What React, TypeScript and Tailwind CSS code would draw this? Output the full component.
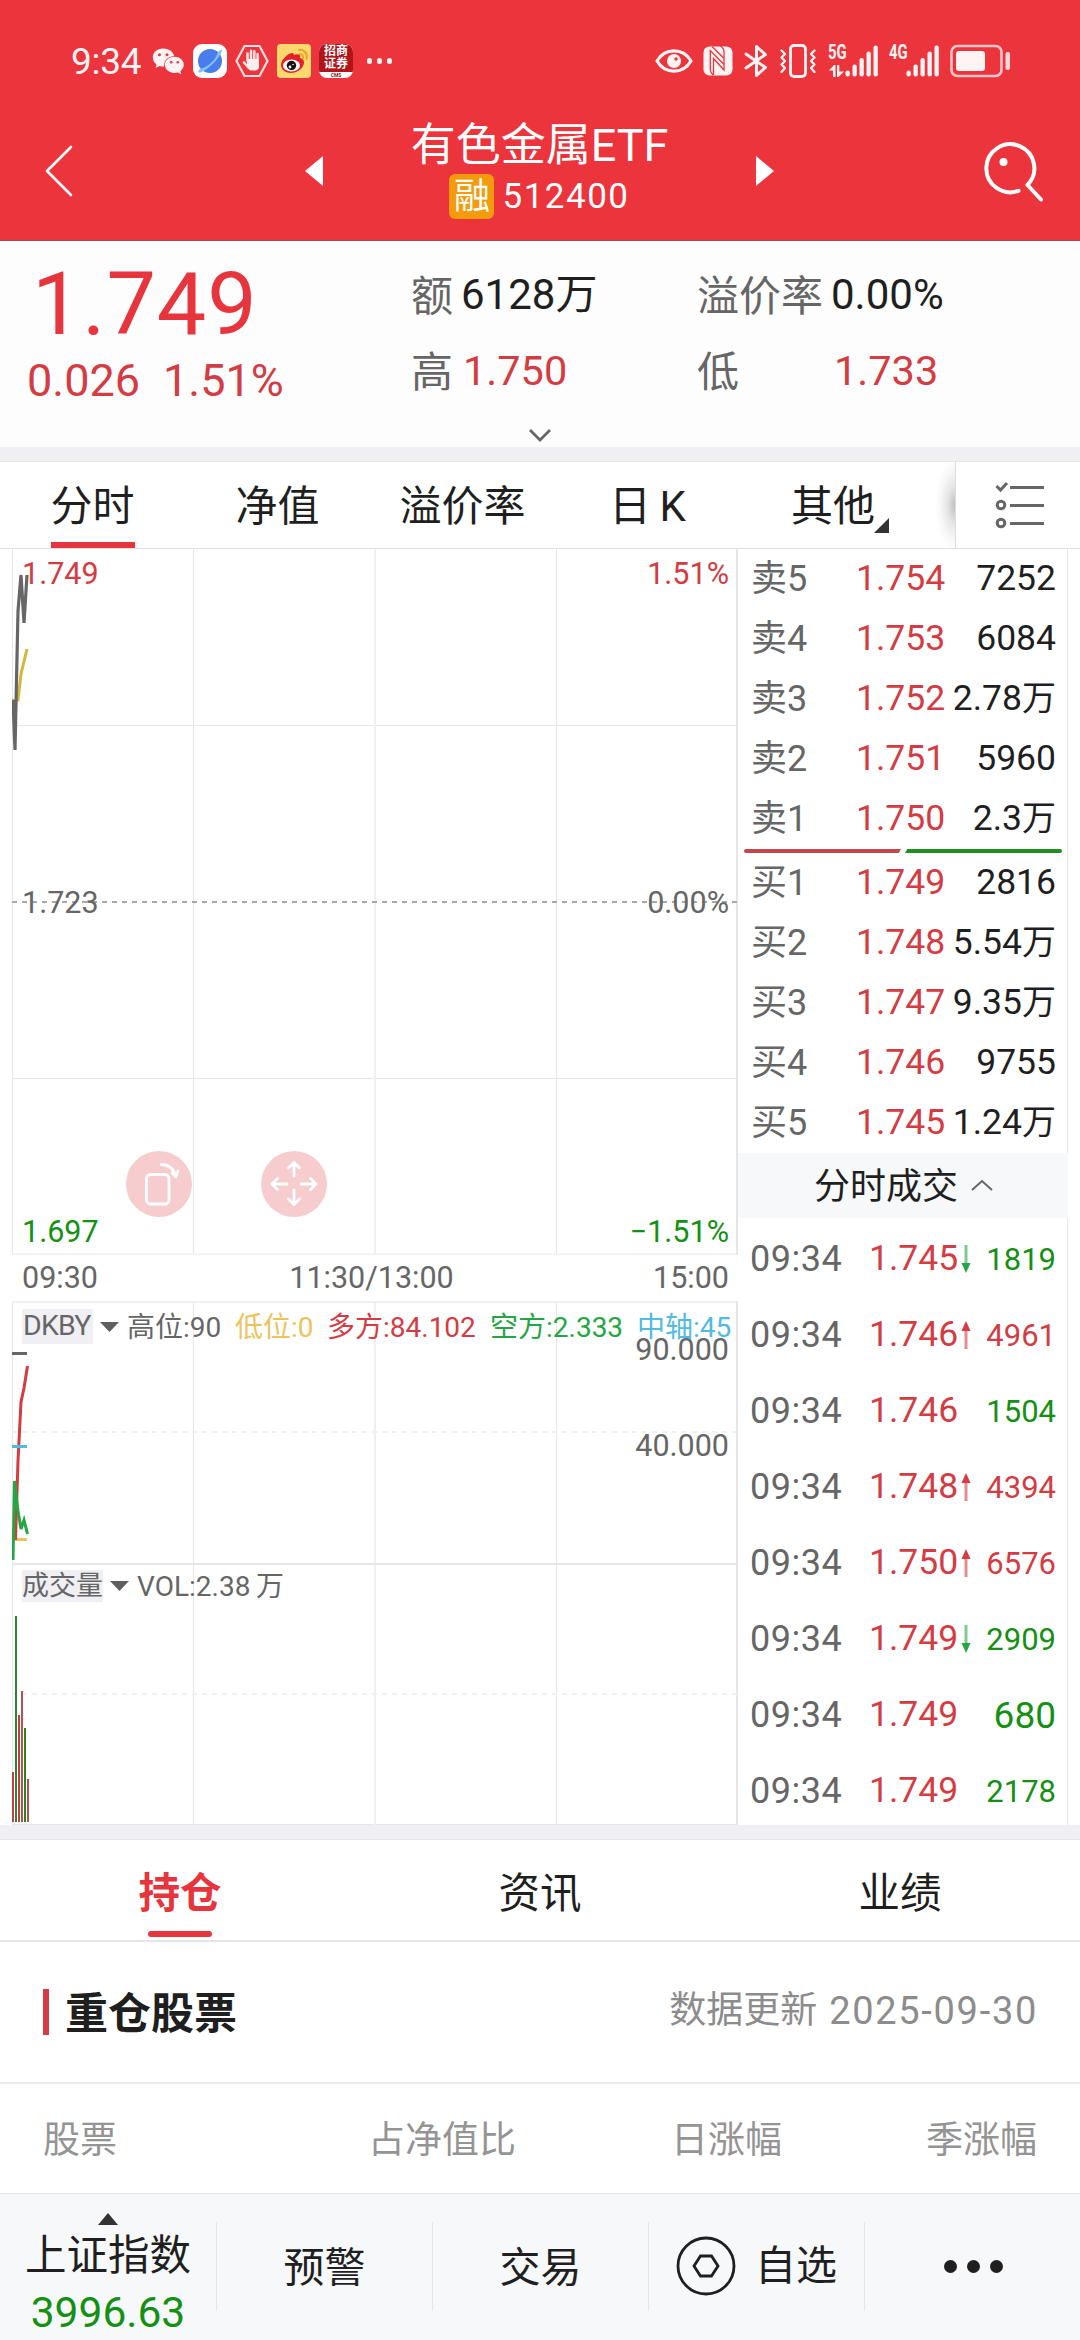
import React from "react";

type Tone = "red" | "green" | "none";

const sells = [
  ["卖5", "1.754", "7252"],
  ["卖4", "1.753", "6084"],
  ["卖3", "1.752", "2.78万"],
  ["卖2", "1.751", "5960"],
  ["卖1", "1.750", "2.3万"],
];
const buys = [
  ["买1", "1.749", "2816"],
  ["买2", "1.748", "5.54万"],
  ["买3", "1.747", "9.35万"],
  ["买4", "1.746", "9755"],
  ["买5", "1.745", "1.24万"],
];
const trades: { price: string; vol: string; arrow: Tone; tone: Tone }[] = [
  { price: "1.745", vol: "1819", arrow: "green", tone: "green" },
  { price: "1.746", vol: "4961", arrow: "red", tone: "red" },
  { price: "1.746", vol: "1504", arrow: "none", tone: "green" },
  { price: "1.748", vol: "4394", arrow: "red", tone: "red" },
  { price: "1.750", vol: "6576", arrow: "red", tone: "red" },
  { price: "1.749", vol: "2909", arrow: "green", tone: "green" },
  { price: "1.749", vol: "680", arrow: "none", tone: "green" },
  { price: "1.749", vol: "2178", arrow: "none", tone: "green" },
];

function StatusBar() {
  return (
    <div className="flex h-[122px] items-center pl-[71px] pr-[69px] text-[#fff3f3]">
      <span className="w-[81px] text-[37px] leading-none tracking-[-0.3px]">9:34</span>
      <svg width="34" height="34" viewBox="0 0 34 34" className="mr-[7px]">
        <path d="M11 4.500C5 4.500.8 8.500.8 13.600c0 3 1.500 5.300 3.700 6.900L3.600 24l4-2c1.500.5 3 .7 4.600.6-.8-6 4-10.500 10-10.300C21.300 7.500 16.800 4.500 11 4.500z" fill="#fff3f3" />
        <path d="M31.800 20.800c0-4.500-4.300-8-9.400-8-5.300 0-9.500 3.500-9.500 8s4.200 8.100 9.500 8.100c1.200 0 2.300-.2 3.400-.5l3.500 1.900-.9-3.100c2.100-1.600 3.400-3.700 3.400-6.400z" fill="#fff3f3" />
        <g fill="#eb343c"><circle cx="7.500" cy="10.800" r="1.500" /><circle cx="15" cy="10.800" r="1.500" /><circle cx="19.200" cy="18.300" r="1.300" /><circle cx="25.800" cy="18.300" r="1.300" /></g>
      </svg>
      <svg width="34" height="34" viewBox="0 0 34 34" className="mr-[8px]">
        <rect width="34" height="34" rx="9" fill="#fff" />
        <circle cx="17" cy="17" r="12" fill="#4a7cec" />
        <path d="M24.500 8.500C28 5 30 5 28.500 8 26 14.500 15 26 8 28.300c-4 1.200-3-1.300-.5-3.800C13 24.500 24 15 24.500 8.500z" fill="#7cc4fb" />
      </svg>
      <svg width="34" height="34" viewBox="0 0 34 34" className="mr-[8px]" fill="none" stroke="#ffdede" strokeLinecap="round">
        <path d="M9.500 2h15L32.500 17l-8 15h-15L1.500 17z" strokeWidth="2.200" strokeLinejoin="round" />
        <path d="M12.500 17V9.500M16 16V6.800M19.300 16V7.300M22.600 17v-7M9 18.500l4 4.500" strokeWidth="2.600" />
        <path d="M12 15h12v8c0 2-2 3.500-4 3.500h-4c-2 0-4-3-4-5z" fill="#ffeeee" stroke="none" />
      </svg>
      <svg width="34" height="34" viewBox="0 0 34 34" className="mr-[8px]">
        <rect width="34" height="34" rx="4" fill="#fbd96d" />
        <path d="M12 10c3-2 5-1 5 1 5-2 7 0 6 3 4 1 5 4 3 8-2 4-7 7-12 7S4 26 4 21s5-9 8-11z" fill="#e4202c" />
        <ellipse cx="14.500" cy="21.500" rx="8.500" ry="6" fill="#fff" />
        <circle cx="14.500" cy="21.500" r="4.700" fill="#111" /><circle cx="13" cy="23" r="1.400" fill="#fff" /><circle cx="16" cy="20.500" r=".8" fill="#fff" />
        <path d="M22 6c5-1 9 4 7.500 9M22.500 10c3 0 4 2 3.500 4.500" fill="none" stroke="#eba527" strokeWidth="2" strokeLinecap="round" />
      </svg>
      <div className="flex h-[34px] w-[34px] flex-col items-center overflow-hidden rounded-[8px] bg-white">
        <div className="flex h-[28px] w-full flex-col items-center justify-center bg-[#b01519] text-[12px] leading-[13px] font-bold text-white">
          <span>招商</span>
          <span>证券</span>
        </div>
        <span className="text-[5px] leading-[6px] font-bold text-[#8c1a1a]">CMS</span>
      </div>
      <div className="ml-[14px] flex gap-[5px]">
        <i className="h-[6px] w-[5px] rounded-full bg-[#fff3f3]" />
        <i className="h-[6px] w-[5px] rounded-full bg-[#fff3f3]" />
        <i className="h-[6px] w-[5px] rounded-full bg-[#fff3f3]" />
      </div>

      <div className="ml-auto flex items-center">
        <svg width="38" height="34" viewBox="0 0 38 34" className="mr-[10px]">
          <path d="M2 17C10 3.500 28 3.500 36 17 28 30.500 10 30.500 2 17z" fill="none" stroke="#fff3f3" strokeWidth="3.200" strokeLinejoin="round" />
          <circle cx="19" cy="17" r="7" fill="#fff3f3" /><circle cx="21" cy="15" r="1.700" fill="#eb343c" />
        </svg>
        <svg width="30" height="34" viewBox="0 0 30 34" className="mr-[11px]">
          <rect x=".5" y="2.500" width="29" height="29" rx="6" fill="#fff3f3" />
          <path d="M10.500 31V14.500L21 26V8c0-2.500-1-4.500-3.500-6M9 2.500L20.500 14M10.500 31C8 29.500 7.300 27.500 7.300 25V6.500L20.500 20" fill="none" stroke="#eb343c" strokeWidth="1.300" />
        </svg>
        <svg width="24" height="34" viewBox="0 0 24 34" className="mr-[11px]" fill="none" stroke="#fff3f3" strokeWidth="3" strokeLinecap="round" strokeLinejoin="round">
          <path d="M2 10l19.500 13.500L12.500 31.500V2.500l9 8L2 24" />
        </svg>
        <svg width="38" height="34" viewBox="0 0 38 34" className="mr-[11px]" fill="none" stroke="#fff3f3" strokeLinecap="round" strokeLinejoin="round">
          <rect x="11.500" y="1.500" width="15" height="31" rx="3.500" strokeWidth="2.800" />
          <path d="M2.500 6.500l3.500 3.500-3.500 3.500L6 17l-3.500 3.500L6 24l-3.500 4M35.500 6.500L32 10l3.500 3.500L32 17l3.500 3.500L32 24l3.500 4" strokeWidth="2.300" />
        </svg>
        <Signal label="5G" arrows />
        <Signal label="4G" />
        <svg width="61" height="34" viewBox="0 0 61 34">
          <rect x="1.500" y="2" width="50" height="30" rx="6" fill="none" stroke="#ffc4c6" strokeWidth="2.600" />
          <rect x="6" y="7" width="29" height="20" rx="3" fill="#fff3f3" />
          <rect x="55.500" y="8" width="4.500" height="18" rx="2" fill="#ffd9da" />
        </svg>
      </div>
    </div>
  );
}

function Signal({ label, arrows }: { label: string; arrows?: boolean }) {
  return (
    <div className="relative mr-[10px] h-[34px] w-[51px]">
      <span className="absolute left-0 top-0 origin-left scale-x-[0.74] text-[20px] leading-[17px] font-bold">{label}</span>
      <svg width="51" height="34" viewBox="0 0 51 34" fill="#fff3f3">
        {arrows && <path d="M1 26.500l5-5.500h1.500v12H5v-6.500zM9 21h2.300v6.500H16L10.500 33H9z" />}
        <rect x="17.500" y="26.500" width="4.300" height="6" rx="2" />
        <rect x="24.500" y="20.500" width="4.300" height="12" rx="2" />
        <rect x="31.500" y="14" width="4.300" height="18.500" rx="2" />
        <rect x="38.500" y="7.500" width="4.300" height="25" rx="2" />
        <rect x="45.500" y="1.500" width="4.300" height="31" rx="2" />
      </svg>
    </div>
  );
}

function TitleBar() {
  return (
    <div className="flex h-[118px] items-start text-white">
      <svg width="40" height="60" viewBox="0 0 40 60" className="mt-[19px] ml-[40px]">
        <path d="M31 6L7 30l24 24" fill="none" stroke="#fff" strokeWidth="2.600" strokeLinecap="round" strokeLinejoin="round" />
      </svg>
      <svg width="18" height="30" viewBox="0 0 18 30" className="mt-[34px] ml-[225px]"><path d="M18 0v30L0 15z" fill="#fff" /></svg>
      <div className="flex w-[433px] flex-col items-center">
        <div className="mt-[1px] text-[45px] leading-[46px]">有色金属ETF</div>
        <div className="mt-[5px] flex items-center">
          <span className="flex h-[45px] w-[45px] items-center justify-center rounded-[6px] bg-[#f49b0b] text-[36px] leading-none">融</span>
          <span className="ml-[8px] text-[35px] leading-none tracking-[1.500px]">512400</span>
        </div>
      </div>
      <svg width="18" height="30" viewBox="0 0 18 30" className="mt-[34px]"><path d="M0 0v30l18-15z" fill="#fff" /></svg>
      <svg width="64" height="64" viewBox="0 0 64 64" className="mt-[18px] ml-[208px]" fill="none" stroke="#fff" strokeWidth="4" strokeLinecap="round" strokeLinejoin="round">
        <path d="M36.500 50.800A24 24 0 1 1 45.500 45L59 59.500" />
        <circle cx="21.500" cy="22" r="4" fill="#fff" stroke="none" />
      </svg>
    </div>
  );
}

function Quote() {
  return (
    <div className="h-[207px] border-t border-[#a5444b] bg-[#fdfdfd]">
      <div className="flex h-[185px]">
        <div className="w-[411px] pl-[27px] text-[#e6353d]">
          <div className="mt-[19px] pl-[5px] text-[88px] leading-[88px] tracking-[0.900px]">1.749</div>
          <div className="mt-[10px] flex text-[45px] leading-[45px] text-[#d43c43]">
            <span>0.026</span>
            <span className="ml-[23px]">1.51%</span>
          </div>
        </div>
        <div className="grid grid-cols-[50px_236px_134px_160px] grid-rows-[76px_76px] items-center pt-[16px] text-[42px] leading-none">
          <span className="pt-[3px] text-[#666]">额</span>
          <span className="text-[#1f1f1f]">6128万</span>
          <span className="pt-[3px] text-[#666]">溢价率</span>
          <span className="text-[#1f1f1f]">0.00%</span>
          <span className="pt-[3px] text-[#666]">高</span>
          <span className="pl-[2px] text-[41.500px] text-[#d43c43]">1.750</span>
          <span className="pt-[3px] text-[#666]">低</span>
          <span className="pl-[3px] text-[41.500px] text-[#d43c43]">1.733</span>
        </div>
      </div>
      <svg width="24" height="14" viewBox="0 0 24 14" className="mx-auto mt-[2px]">
        <path d="M2 2l10 10L22 2" fill="none" stroke="#666" strokeWidth="2.800" />
      </svg>
    </div>
  );
}

function PeriodTabs() {
  return (
    <div className="flex h-[87px] border-t border-[#e6e6e8] bg-white text-[42px] leading-none text-[#1f1f1f]">
      <div className="grid w-[955px] grid-cols-[185px_185px_185px_185px_185px_30px]">
        <div className="flex flex-col items-center pt-[24px]">
          <span className="h-[56px]">分时</span>
          <span className="h-[6px] w-[84px] bg-[#e6353d]" />
        </div>
        <div className="pt-[24px] text-center">净值</div>
        <div className="pt-[24px] text-center">溢价率</div>
        <div className="pt-[24px] text-center">日&thinsp;K</div>
        <div className="relative pt-[24px] pl-[1px] text-center">
          其他
          <svg width="15" height="15" viewBox="0 0 15 15" className="absolute top-[56px] left-[134px]"><path d="M15 0v15H0z" fill="#333" /></svg>
        </div>
        <div className="bg-[radial-gradient(ellipse_20px_48px_at_100%_50%,#bfbfbf,#e6e6e6_40%,#f8f8f8_75%,#ffffff)]" />
      </div>
      <div className="flex flex-1 items-center border-l border-[#ddd] pl-[39px]">
        <svg width="50" height="50" viewBox="0 0 50 50" fill="none" stroke="#666" strokeWidth="3">
          <path d="M1.500 6l4 4L12 3M15 7.500h34M15 25.500h34M15 43.500h34" />
          <circle cx="6" cy="25" r="3.800" /><circle cx="6" cy="43" r="3.800" />
        </svg>
      </div>
    </div>
  );
}

const grid = "#e6e6e6";

function PriceChart() {
  return (
    <div className="relative h-[706px] w-[726px] text-[30.500px] leading-none">
      <svg width="726" height="706" viewBox="12 549 726 706">
        <g stroke={grid} fill="none">
          <path d="M12.500 549V1255M193.500 549V1255M556.500 549V1255M12 725.500H737M12 1078.500H737" />
          <path d="M375 549V1255M12 1254.500H738" strokeWidth="2" stroke="#f0f0f0" />
          <path d="M737 549V1255" strokeWidth="2" />
        </g>
        <path d="M12 902H737" stroke="#a9a9a9" strokeWidth="2" strokeDasharray="5 5" />
        <path d="M12 700l3 1 3-1 3-26 6-25" fill="none" stroke="#d3b93a" strokeWidth="3" />
        <path d="M13 700l2 50 3-139 3-36 3 48 3-48" fill="none" stroke="#666" strokeWidth="3.200" strokeLinejoin="bevel" />
      </svg>
      <span className="absolute top-[10px] left-[10px] text-[#d43c43]">1.749</span>
      <span className="absolute top-[10px] right-[9px] text-[#d43c43]">1.51%</span>
      <span className="absolute top-[339px] left-[10px] text-[#666]">1.723</span>
      <span className="absolute top-[339px] right-[9px] text-[#666]">0.00%</span>
      <span className="absolute top-[668px] left-[10px] text-[#159015]">1.697</span>
      <span className="absolute top-[668px] right-[9px] text-[#159015]">−1.51%</span>
      <div className="absolute top-[602px] left-[114px] h-[66px] w-[66px] rounded-full bg-[#f7ccce]">
        <svg width="66" height="66" viewBox="0 0 66 66" fill="none" stroke="#fff" strokeWidth="2.800" strokeLinecap="round" strokeLinejoin="round">
          <rect x="20.500" y="23.500" width="22.500" height="29.500" rx="4" />
          <path d="M35.500 13.500c7 0 12 4 14.500 12M46 22l4 4 2-6" />
        </svg>
      </div>
      <div className="absolute top-[602px] left-[249px] h-[66px] w-[66px] rounded-full bg-[#f7ccce]">
        <svg width="66" height="66" viewBox="0 0 66 66" fill="none" stroke="#fff" strokeWidth="2.800" strokeLinecap="round" strokeLinejoin="round">
          <path d="M33 25V11.500M27.500 17l5.500-5.500 5.500 5.500M33 39v14.500M27.500 48l5.500 5.500 5.500-5.500M26 33H11M16.500 27.500L11 33l5.500 5.500M40 33h15M49.500 27.500L55 33l-5.500 5.500" />
        </svg>
      </div>
    </div>
  );
}

function Caret() {
  return <svg width="19" height="10" viewBox="0 0 19 10"><path d="M0 0h19L9.500 10z" fill="#5f5f5f" /></svg>;
}

function IndicatorChart() {
  return (
    <div className="relative h-[262px] w-[726px] text-[28px] leading-none">
      <svg width="726" height="262" viewBox="12 1301 726 262">
        <g stroke={grid} fill="none">
          <path d="M12.500 1301V1563M193.500 1301V1563M556.500 1301V1563" />
          <path d="M375 1301V1563M12 1302H738" strokeWidth="2" stroke="#f0f0f0" />
          <path d="M737 1301V1563" strokeWidth="2" />
          <path d="M12 1432H737" strokeWidth="2" stroke="#f1f1f1" strokeDasharray="5 5" />
        </g>
        <g fill="none" strokeWidth="3">
          <path d="M12 1353.500H27" stroke="#666" />
          <path d="M15 1539.500H27" stroke="#eec25e" />
          <path d="M15.500 1540l2.500-79 3-59 3-14 3.500-22" stroke="#d43c43" />
          <path d="M12 1446.500H27" stroke="#52bbe0" />
          <path d="M13 1560l1.500-79 3.500 30 3 18 3-9 3.500 14" stroke="#25a645" />
        </g>
      </svg>
      <div className="absolute top-[8px] left-[10px] flex h-[35px] items-center whitespace-nowrap">
        <span className="flex h-[35px] w-[71px] items-center bg-[#efeff4] pl-px text-[28.500px] text-[#666] tracking-[-0.8px]">DKBY</span>
        <span className="ml-[7px] w-[27px]"><Caret /></span>
        <span className="w-[108px] pt-[2px] text-[#666]">高位:90</span>
        <span className="w-[92px] pt-[2px] text-[#eec25e]">低位:0</span>
        <span className="w-[163px] pt-[2px] text-[#d43c43]">多方:84.102</span>
        <span className="w-[147px] pt-[2px] text-[#25a645]">空方:2.333</span>
        <span className="pt-[2px] text-[#52bbe0]">中轴:45</span>
      </div>
      <span className="absolute top-[34px] right-[9px] text-[30.500px] text-[#666]">90.000</span>
      <span className="absolute top-[130px] right-[9px] text-[30.500px] text-[#666]">40.000</span>
    </div>
  );
}

const bars: [number, number, string][] = [
  [12, 1772, "#b9443f"],
  [15, 1616, "#2f7f36"],
  [18, 1715, "#b9443f"],
  [21, 1691, "#ad5552"],
  [24, 1728, "#34801c"],
  [27, 1779, "#ad5552"],
];

function VolumeChart() {
  return (
    <div className="relative h-[262px] w-[726px] text-[28px] leading-none">
      <svg width="726" height="262" viewBox="12 1563 726 262">
        <g stroke={grid} fill="none">
          <path d="M12.500 1563V1825M193.500 1563V1825M556.500 1563V1825M12 1824.500H738" />
          <path d="M375 1563V1825" strokeWidth="2" stroke="#f0f0f0" />
          <path d="M12 1564H738M737 1563V1825" strokeWidth="2" />
          <path d="M12 1694H737" strokeWidth="2" stroke="#f1f1f1" strokeDasharray="5 5" />
        </g>
        {bars.map(([x, y, c]) => (
          <rect key={x} x={x} y={y} width="2" height={1822 - y} fill={c} />
        ))}
      </svg>
      <div className="absolute top-[7px] left-[10px] flex h-[32px] items-center whitespace-nowrap text-[#666]">
        <span className="flex h-[32px] w-[81px] items-center bg-[#efeff4] pt-px text-[27px]">成交量</span>
        <span className="ml-[7px] w-[27px]"><Caret /></span>
        <span className="pt-px">VOL:2.38&thinsp;万</span>
      </div>
    </div>
  );
}

function BookRow({ row }: { row: string[] }) {
  return (
    <div className="flex h-[60px] items-center">
      <span className="w-[105px] text-[#666]">{row[0]}</span>
      <span className="text-[35.500px] text-[#d43c43]">{row[1]}</span>
      <span className="ml-auto text-[35.500px] text-[#1f1f1f]">
        {row[2].replace("万", "")}
        {row[2].endsWith("万") && <span className="text-[34px]">万</span>}
      </span>
    </div>
  );
}

function Arrow({ tone }: { tone: Tone }) {
  if (tone === "none") return <span className="w-[10px]" />;
  return tone === "red" ? (
    <svg width="10" height="28" viewBox="0 0 10 28"><path d="M5 6v22" stroke="#e58c90" strokeWidth="3" /><path d="M5 0l4.500 10h-9z" fill="#d43c43" /></svg>
  ) : (
    <svg width="10" height="28" viewBox="0 0 10 28"><path d="M5 0v22" stroke="#7fc995" strokeWidth="3" /><path d="M5 28L.5 18h9z" fill="#25a645" /></svg>
  );
}

function OrderPanel() {
  return (
    <div className="w-[330px] border-r border-[#e6e6e6] text-[36px] leading-none">
      <div className="pl-[13px] pr-[11px]">{sells.map((r) => <BookRow key={r[0]} row={r} />)}</div>
      <div className="flex h-[4px] gap-[4px] pr-[5px] pl-[6px]">
        <span className="flex-1 rounded-l-full bg-[#c4454b] [clip-path:polygon(0_0,100%_0,98.5%_100%,0_100%)]" />
        <span className="flex-1 rounded-r-full bg-[#1f8f1f] [clip-path:polygon(1.5%_0,100%_0,100%_100%,0_100%)]" />
      </div>
      <div className="pl-[13px] pr-[11px]">{buys.map((r) => <BookRow key={r[0]} row={r} />)}</div>
      <div className="flex h-[65px] w-[330px] items-center bg-[#f7f8fa] pl-[76px] text-[#1f1f1f]">
        <span className="pt-[3px]">分时成交</span>
        <svg width="24" height="13" viewBox="0 0 24 13" className="ml-[12px]"><path d="M2 11l10-9 10 9" fill="none" stroke="#666" strokeWidth="2" /></svg>
      </div>
      <div className="pt-[3px] pl-[12px] pr-[11px]">
        {trades.map((t, i) => (
          <div key={i} className="flex h-[76px] items-center">
            <span className="w-[119px] tracking-[0.500px] text-[#666]">09:34</span>
            <span className="w-[92px] text-[35.500px] text-[#d43c43]">{t.price}</span>
            <Arrow tone={t.arrow} />
            <span
              className={
                "ml-auto " +
                (t.vol.length > 3 ? "text-[31px] " : "text-[37px] ") +
                (t.tone === "red" ? "text-[#d43c43]" : "text-[#159015]")
              }
            >
              {t.vol}
            </span>
          </div>
        ))}
      </div>
    </div>
  );
}

function Holdings() {
  return (
    <div className="bg-white">
      <div className="grid h-[103px] grid-cols-3 border-t border-b-2 border-[#e6e6e8] text-[41.500px] leading-none text-[#1f1f1f]">
        <div className="flex flex-col items-center pt-[33px]">
          <span className="h-[58px] font-bold text-[#e6353d]">持仓</span>
          <span className="h-[6px] w-[64px] rounded-full bg-[#e6353d]" />
        </div>
        <div className="pt-[33px] text-center">资讯</div>
        <div className="pt-[33px] text-center">业绩</div>
      </div>
      <div className="flex h-[142px] items-center border-b-2 border-[#ececec] pr-[42px] pl-[43px] leading-none">
        <span className="h-[46px] w-[6px] bg-[#d43c43]" />
        <span className="ml-[16px] pt-[5px] text-[43px] font-bold text-[#1f1f1f]">重仓股票</span>
        <span className="ml-auto pb-[3px] text-[37px] text-[#8c8c8c]">数据更新</span>
        <span className="ml-[12px] pb-[3px] text-[38px] tracking-[1.700px] text-[#8c8c8c]">2025-09-30</span>
      </div>
      <div className="grid h-[109px] grid-cols-[200px_316px_266px_255px] items-center pt-[4px] text-right text-[37px] leading-none text-[#949494]">
        <span className="pl-[43px] text-left">股票</span>
        <span>占净值比</span>
        <span>日涨幅</span>
        <span>季涨幅</span>
      </div>
    </div>
  );
}

function BottomBar() {
  return (
    <div className="grid h-[147px] grid-cols-5 border-t border-[#e2e4e6] bg-[#f7f8fa] text-[41px] leading-none text-[#1f1f1f]">
      <div className="flex flex-col items-center">
        <svg width="20" height="12" viewBox="0 0 20 12" className="mt-[19px]"><path d="M10 0l10 12H0z" fill="#333" /></svg>
        <span className="mt-[10px] text-[41.500px]">上证指数</span>
        <span className="mt-[14px] text-[42.500px] leading-[43px] text-[#159015]">3996.63</span>
      </div>
      <div className="mt-[28px] flex h-[89px] items-center justify-center border-l border-[#e4e5e8] pt-[4px]">预警</div>
      <div className="mt-[28px] flex h-[89px] items-center justify-center border-l border-[#e4e5e8] pt-[4px]">交易</div>
      <div className="mt-[28px] flex h-[89px] items-center border-l border-[#e4e5e8] pl-[27px]">
        <svg width="60" height="60" viewBox="0 0 60 60" fill="none" stroke="#1f1f1f" strokeWidth="2.800" className="mt-[-2px]">
          <circle cx="30" cy="30" r="28" />
          <path d="M24.500 20h11L42 30l-6.500 10h-11L18 30z" />
        </svg>
        <span className="ml-[19px]">自选</span>
      </div>
      <div className="mt-[28px] flex h-[89px] items-center justify-center gap-[10px] border-l border-[#e4e5e8] pl-[2px]">
        <i className="h-[13px] w-[13px] rounded-full bg-[#1f1f1f]" />
        <i className="h-[13px] w-[13px] rounded-full bg-[#1f1f1f]" />
        <i className="h-[13px] w-[13px] rounded-full bg-[#1f1f1f]" />
      </div>
    </div>
  );
}

export default function App() {
  return (
    <div className="flex h-[2340px] w-[1080px] flex-col overflow-hidden bg-white font-['Roboto','Noto_Sans_CJK_SC',sans-serif]">
      <header className="h-[240px] bg-[#eb343c]">
        <StatusBar />
        <TitleBar />
      </header>
      <Quote />
      <div className="h-[14px] bg-[#efeff4]" />
      <PeriodTabs />
      <div className="flex h-[1277px] border-t border-[#e0e0e0] pl-[12px]">
        <div className="w-[726px]">
          <PriceChart />
          <div className="grid h-[46px] grid-cols-3 items-center pr-[9px] pl-[10px] text-[30.500px] leading-none text-[#666]">
            <span>09:30</span>
            <span className="pr-[8px] text-center">11:30/13:00</span>
            <span className="text-right">15:00</span>
          </div>
          <IndicatorChart />
          <VolumeChart />
        </div>
        <OrderPanel />
      </div>
      <div className="h-[14px] bg-[#efeff4]" />
      <Holdings />
      <BottomBar />
    </div>
  );
}
